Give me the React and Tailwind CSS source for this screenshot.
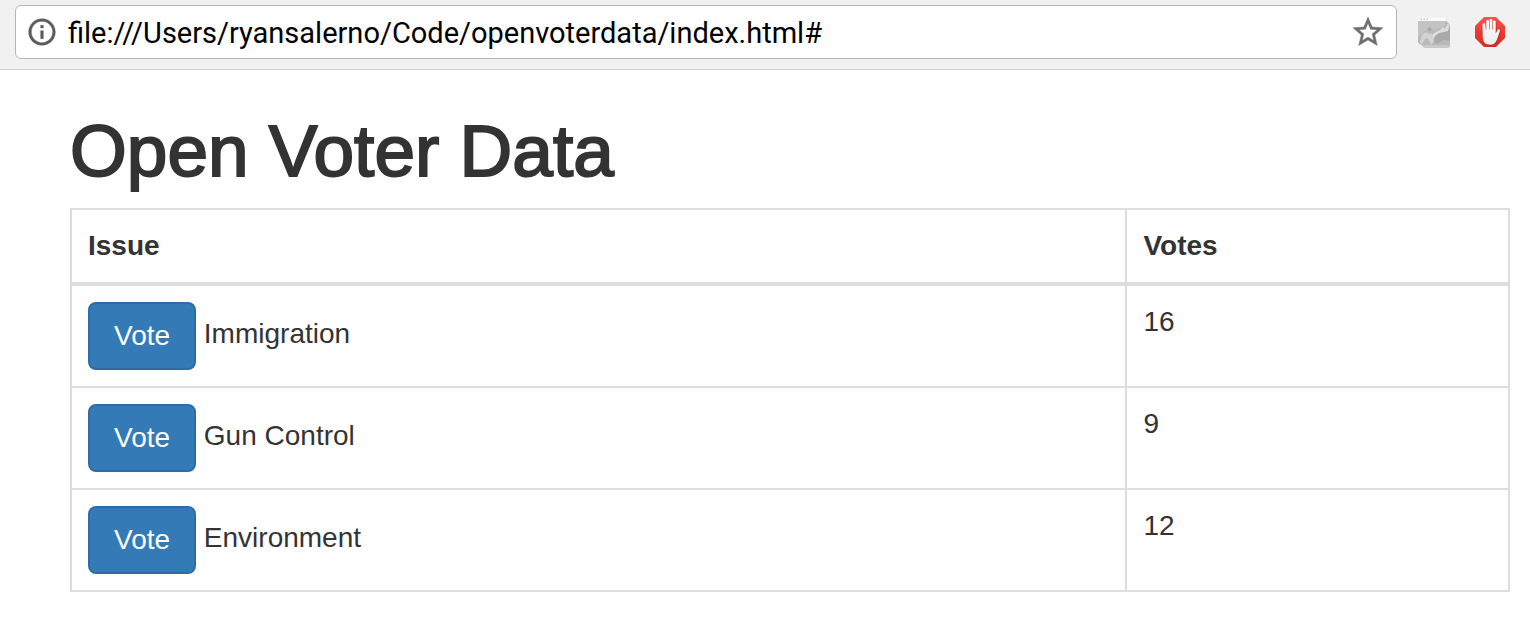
const issues = [
  { name: "Immigration", votes: 16 },
  { name: "Gun Control", votes: 9 },
  { name: "Environment", votes: 12 },
];

function InfoIcon() {
  return (
    <svg viewBox="0 0 24 24" className="size-8 shrink-0 fill-[#5a5a5a] stroke-[#5a5a5a]" strokeWidth="0.3" aria-hidden="true">
      <path d="M11 7h2v2h-2zM11 11h2v6h-2zM12 2C6.48 2 2 6.48 2 12s4.480 10 10 10 10-4.480 10-10S17.520 2 12 2zm0 18c-4.410 0-8-3.590-8-8s3.590-8 8-8 8 3.590 8 8-3.590 8-8 8z" />
    </svg>
  );
}

function StarIcon() {
  return (
    <svg viewBox="0 0 24 24" className="size-9 fill-[#6e6e6e] stroke-[#6e6e6e]" strokeWidth="0.3" aria-hidden="true">
      <path d="M22 9.24l-7.19-.62L12 2 9.19 8.63 2 9.24l5.46 4.73L5.82 21 12 17.27 18.18 21l-1.63-7.03L22 9.24zM12 15.4l-3.76 2.27 1-4.28-3.32-2.88 4.38-.38L12 6.1l1.71 4.04 4.38.38-3.32 2.88 1 4.28L12 15.4z" />
    </svg>
  );
}

function MapIcon() {
  return (
    <svg viewBox="0 -1 32 32" className="size-8" aria-hidden="true">
      <path d="M0 2.500Q0 1 1.500 1H26Q28 1 28.500 4L31 6.500Q32 8 32 10V28Q32 31 29 31H8Q5.500 31 4.500 29L1 26.500Q0 26 0 24.500Z" fill="#b9b9b9" />
      <path d="M0 2Q0 0.500 1.500 0.500H26.500Q28.500 1 28.500 4H0Z" fill="#fafafa" />
      <path d="M2.500 1.500h1.500v1.500h-1.500zM5.500 1.500h1.500v1.500h-1.500zM8.500 1.500h1.500v1.500h-1.500z" fill="#c4c4c4" />
      <path d="M0 4H28.500L27 9L21 11L15 14L12 9L8 14L0 20Z" fill="#c3c3c3" />
      <path d="M17 16L23 15L32 12V24L25 23L19 27L15 24Z" fill="#a9a9a9" />
      <path d="M2 25L4 18L8 15L11 17L13 16L15 19L16 24L13 28L11 23L8 21L5 25L4 28Z" fill="#d3d3d3" />
      <path d="M22 13L25 10L27 12L30 6.500L31 8L30 14L26 15L21 16L17 19L16 22L14 18L18 15Z" fill="#dedede" />
      <path d="M9 12L12 10L14 13L11 14Z" fill="#a4a4a4" />
      <path d="M4 28H31.500Q31 31 29 31H8Q6 31 4.500 29Z" fill="#c8c8c8" />
    </svg>
  );
}

function StopHandIcon() {
  return (
    <svg viewBox="0 0 32 32" className="size-8" aria-hidden="true">
      <defs>
        <linearGradient id="stop-red" x1="0" y1="0" x2="0" y2="1">
          <stop offset="0" stopColor="#f4554d" />
          <stop offset="0.5" stopColor="#ea3a32" />
          <stop offset="1" stopColor="#d92a24" />
        </linearGradient>
        <linearGradient id="stop-hand" x1="0" y1="0" x2="0" y2="1">
          <stop offset="0" stopColor="#ffffff" />
          <stop offset="1" stopColor="#ececec" />
        </linearGradient>
      </defs>
      <path d="M10 1H22L31 10V22L22 31H10L1 22V10Z" fill="url(#stop-red)" />
      <path
        d="M8.500 8.500Q8.500 7 9.900 7Q11.300 7 11.300 8.500L11.900 14H12.300V5.200Q12.300 3.700 13.600 3.700Q15 3.700 15 5.200V13.500H15.600V4.200Q15.600 2.700 17 2.700Q18.400 2.700 18.400 4.200V13.500H19V6Q19 4.600 20.400 4.600Q21.700 4.600 21.700 6V17.500L23.300 14.500Q24.200 13 25.400 13.400Q26.300 13.900 25.800 15.200L23 23.500Q21.300 28.800 16.200 28.800Q9 28.800 8.800 21.500Z"
        fill="#9e1b16"
        opacity="0.45"
        transform="translate(0.900 0.900)"
      />
      <path
        d="M8.500 8.500Q8.500 7 9.900 7Q11.300 7 11.300 8.500L11.900 14H12.300V5.200Q12.300 3.700 13.600 3.700Q15 3.700 15 5.200V13.500H15.600V4.200Q15.600 2.700 17 2.700Q18.400 2.700 18.400 4.200V13.500H19V6Q19 4.600 20.400 4.600Q21.700 4.600 21.700 6V17.500L23.300 14.500Q24.200 13 25.400 13.400Q26.300 13.900 25.800 15.200L23 23.500Q21.300 28.800 16.200 28.800Q9 28.800 8.800 21.500Z"
        fill="url(#stop-hand)"
      />
    </svg>
  );
}

export default function App() {
  return (
    <div className="min-h-screen bg-white font-['Liberation_Sans',Arial,sans-serif] text-[28px] leading-10 text-[#333]">
      <header className="flex items-center border-b border-[#cfcfcf] bg-[#f1f1f1] pt-[5px] pr-6 pb-[10px] pl-[15px]">
        <div className="flex h-[54px] flex-1 items-center gap-2.5 rounded-md border border-[#b5b5b5] bg-white px-2.5">
          <InfoIcon />
          <input
            type="text"
            aria-label="Address"
            defaultValue="file:///Users/ryansalerno/Code/openvoterdata/index.html#"
            className="min-w-0 flex-1 bg-transparent pt-0.5 font-[Roboto,sans-serif] text-[29px] leading-10 text-black outline-none"
          />
          <button type="button" aria-label="Bookmark this page">
            <StarIcon />
          </button>
        </div>
        <div className="flex items-center gap-6 pl-[21px]">
          <button type="button" aria-label="Map extension">
            <MapIcon />
          </button>
          <button type="button" aria-label="Ad blocker">
            <StopHandIcon />
          </button>
        </div>
      </header>

      <main className="pt-10 pr-5 pl-[70px]">
        <h1 className="mb-4 text-[73px] leading-[82px] font-medium [-webkit-text-stroke:2px_#333]">
          Open Voter Data
        </h1>
        <table className="w-full table-fixed border-collapse border-2 border-[#ddd] text-left">
          <thead>
            <tr>
              <th className="w-[73.4%] border-2 border-b-4 border-[#ddd] px-4 py-4 font-bold">Issue</th>
              <th className="border-2 border-b-4 border-[#ddd] px-4 py-4 font-bold">Votes</th>
            </tr>
          </thead>
          <tbody>
            {issues.map((issue) => (
              <tr key={issue.name}>
                <td className="border-2 border-[#ddd] p-4 align-top">
                  <button
                    type="button"
                    className="rounded-lg border-2 border-[#2e6da4] bg-[#337ab7] px-6 py-3 align-middle text-white"
                  >
                    Vote
                  </button>{" "}
                  {issue.name}
                </td>
                <td className="border-2 border-[#ddd] p-4 align-top">{issue.votes}</td>
              </tr>
            ))}
          </tbody>
        </table>
      </main>
    </div>
  );
}
